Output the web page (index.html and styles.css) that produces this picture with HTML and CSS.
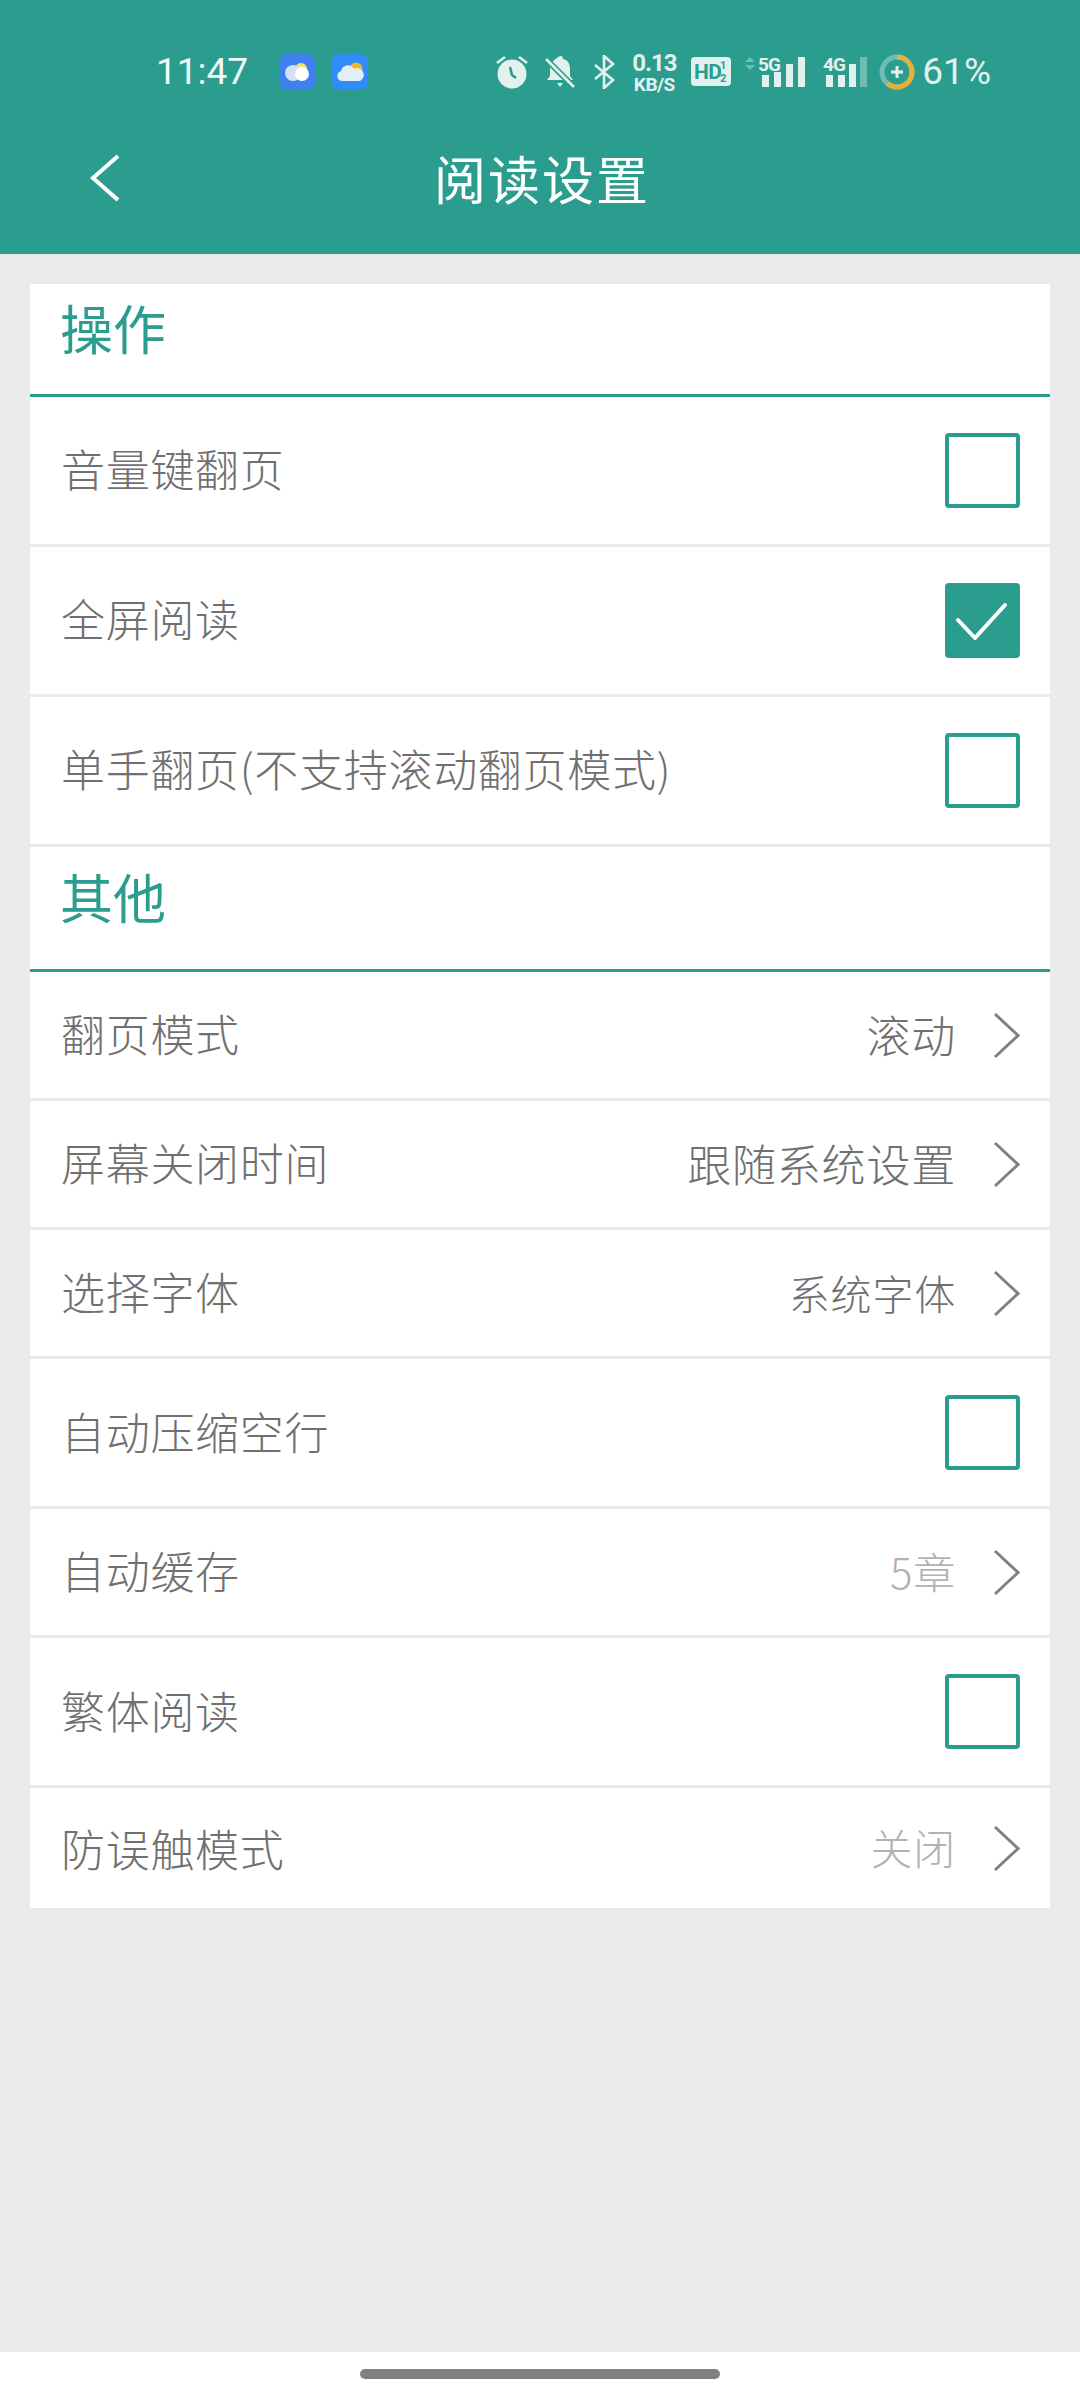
FILE: index.html
```html
<!DOCTYPE html>
<html lang="zh-CN">
<head>
    <meta charset="UTF-8">
    <meta name="viewport" content="width=device-width, initial-scale=1.0">
    <title>阅读设置</title>
    <link rel="stylesheet" href="styles.css">
</head>
<body>

    <header class="app-header">
        <div class="status-bar">
            <span class="status-time">11:47</span>
            <svg class="app-icon" width="36" height="36" viewBox="0 0 36 36">
                <rect width="36" height="36" rx="8" fill="#3f7ff0"/>
                <circle cx="22" cy="15" r="6" fill="#f5e36a"/>
                <circle cx="14" cy="19" r="8" fill="#d6e0f5"/>
                <circle cx="23" cy="20" r="7" fill="#ffffff"/>
            </svg>
            <svg class="app-icon app-icon-weather" width="36" height="36" viewBox="0 0 36 36">
                <rect width="36" height="36" rx="8" fill="#2f8cf8"/>
                <circle cx="24" cy="15" r="6.5" fill="#f7b52c"/>
                <path d="M10 27a5 5 0 0 1-1-9.8 7 7 0 0 1 13-2.4 6 6 0 0 1 6 12.2z" fill="#e4eef8"/>
            </svg>
            <div class="status-icons">
                <svg class="ic-alarm" width="32" height="34" viewBox="0 0 32 34">
                    <circle cx="16" cy="19" r="14.5" fill="#e3f1ee"/>
                    <path d="M1 8l8-6M31 8l-8-6" stroke="#e3f1ee" stroke-width="2.6" fill="none"/>
                    <path d="M14 12l2 8 4 3" stroke="#2a9d8e" stroke-width="2.6" fill="none"/>
                </svg>
                <svg class="ic-bell" width="30" height="34" viewBox="0 0 30 34">
                    <path d="M15 1a3 3 0 0 1 3 3c5 1 7 5 7 10v7l3 4H2l3-4v-7c0-5 3-9 10-13z" fill="#e3f1ee"/>
                    <path d="M12 28h6l-3 4z" fill="#e3f1ee"/>
                    <path d="M2 5l27 27" stroke="#2a9d8e" stroke-width="6"/>
                    <path d="M1 4l28 28" stroke="#e3f1ee" stroke-width="2.6"/>
                </svg>
                <svg class="ic-bt" width="21" height="34" viewBox="0 0 21 34">
                    <path d="M1 10l18 15-9 8V1l9 8L1 24" stroke="#e3f1ee" stroke-width="2.6" fill="none"/>
                </svg>
                <div class="net-speed">
                    <span class="net-num">0.13</span>
                    <span class="net-unit">KB/S</span>
                </div>
                <svg class="ic-hd" width="40" height="30" viewBox="0 0 40 30">
                    <rect width="40" height="29" rx="4" fill="#e3f1ee"/>
                    <text class="hd-label" x="3" y="22" fill="#2a9d8e">HD</text>
                    <text class="hd-small" x="29" y="12" fill="#2a9d8e">1</text>
                    <text class="hd-small" x="29" y="25" fill="#2a9d8e">2</text>
                </svg>
                <svg class="ic-signal" width="60" height="38" viewBox="0 0 60 38">
                    <path d="M0 9l5-5 5 5zM0 12l5 5 5-5z" fill="#6fbdb1"/>
                    <text class="sig-label" x="13" y="18" fill="#e3f1ee">5G</text>
                    <rect x="17" y="22" width="7" height="12" fill="#e3f1ee"/>
                    <rect x="29" y="19" width="7" height="15" fill="#e3f1ee"/>
                    <rect x="41" y="11" width="7" height="23" fill="#e3f1ee"/>
                    <rect x="53" y="4" width="7" height="30" fill="#e3f1ee"/>
                </svg>
                <svg class="ic-signal-b" width="44" height="38" viewBox="0 0 44 38">
                    <text class="sig-label" x="0" y="18" fill="#e3f1ee">4G</text>
                    <rect x="3" y="22" width="7" height="12" fill="#e3f1ee"/>
                    <rect x="15" y="22" width="7" height="12" fill="#e3f1ee"/>
                    <rect x="26" y="11" width="7" height="23" fill="#e3f1ee"/>
                    <rect x="37" y="4" width="7" height="30" fill="#6fbdb1"/>
                </svg>
                <svg class="ic-batt" width="36" height="36" viewBox="0 0 36 36">
                    <circle cx="18" cy="18" r="15" stroke="#6fbdb1" stroke-width="5" fill="none"/>
                    <path d="M18 3a15 15 0 1 1-9.6 26.5" stroke="#e4b23a" stroke-width="5" fill="none"/>
                    <path d="M18 12v12M12 18h12" stroke="#e3f1ee" stroke-width="3"/>
                </svg>
                <span class="status-batt">61%</span>
            </div>
        </div>
        <div class="nav-bar">
            <svg class="nav-back" width="32" height="48" viewBox="0 0 32 48">
                <path d="M29 2L4 24l25 22" stroke="#ffffff" stroke-width="4" fill="none"/>
            </svg>
            <h1 class="nav-title">阅读设置</h1>
        </div>
    </header>

    <main class="content">
        <section class="card">
            <div class="group-ops">
                <h2 class="section-title">操作</h2>
                <div class="row row-check">
                    <span class="row-label">音量键翻页</span>
                    <span class="checkbox"></span>
                </div>
                <div class="row row-check">
                    <span class="row-label">全屏阅读</span>
                    <span class="checkbox checked">
                        <svg width="67" height="67" viewBox="0 0 67 67">
                            <path d="M9 33l17 18 30-33" stroke="#ffffff" stroke-width="4" stroke-linecap="round" stroke-linejoin="round" fill="none"/>
                        </svg>
                    </span>
                </div>
                <div class="row row-check">
                    <span class="row-label">单手翻页(不支持滚动翻页模式)</span>
                    <span class="checkbox"></span>
                </div>
            </div>

            <h2 class="section-title section-title-b">其他</h2>
            <div class="row row-link">
                <span class="row-label">翻页模式</span>
                <span class="row-value">滚动</span>
                <svg class="chevron" width="27" height="47" viewBox="0 0 27 47"><path d="M2 2l23 21.5L2 45" /></svg>
            </div>
            <div class="row row-link">
                <span class="row-label">屏幕关闭时间</span>
                <span class="row-value">跟随系统设置</span>
                <svg class="chevron" width="27" height="47" viewBox="0 0 27 47"><path d="M2 2l23 21.5L2 45" /></svg>
            </div>
            <div class="row row-link">
                <span class="row-label">选择字体</span>
                <span class="row-value value-small">系统字体</span>
                <svg class="chevron" width="27" height="47" viewBox="0 0 27 47"><path d="M2 2l23 21.5L2 45" /></svg>
            </div>
            <div class="row row-check">
                <span class="row-label">自动压缩空行</span>
                <span class="checkbox"></span>
            </div>
            <div class="row row-link">
                <span class="row-label">自动缓存</span>
                <span class="row-value value-muted">5章</span>
                <svg class="chevron" width="27" height="47" viewBox="0 0 27 47"><path d="M2 2l23 21.5L2 45" /></svg>
            </div>
            <div class="row row-check">
                <span class="row-label">繁体阅读</span>
                <span class="checkbox"></span>
            </div>
            <div class="row row-link row-last">
                <span class="row-label">防误触模式</span>
                <span class="row-value value-muted">关闭</span>
                <svg class="chevron" width="27" height="47" viewBox="0 0 27 47"><path d="M2 2l23 21.5L2 45" /></svg>
            </div>
        </section>
    </main>

    <footer class="gesture-bar">
        <div class="gesture-pill"></div>
    </footer>

</body>
</html>
```
FILE: styles.css
```css
* {
    box-sizing: border-box;
}

body {
    margin: 0;
    width: 1080px;
    height: 2400px;
    display: flex;
    flex-direction: column;
    background: #ebebeb;
    font-family: "Noto Sans CJK SC", "Noto Sans", sans-serif;
    color: #707070;
}

/* header */
.app-header {
    height: 254px;
    background: #2a9d8e;
    color: #fff;
}

.status-bar {
    height: 90px;
    padding: 54px 89px 0 156px;
    display: flex;
    align-items: flex-start;
}

.status-time {
    width: 123px;
    font-family: Roboto, sans-serif;
    font-size: 37px;
    line-height: 36px;
    font-weight: 400;
    color: #f2f9f7;
}

.app-icon { flex: none; }
.app-icon-weather { margin-left: 17px; }

.status-icons {
    margin-left: auto;
    display: flex;
    align-items: center;
    height: 36px;
}

.ic-bell { margin-left: 17px; }
.ic-bt { margin-left: 19px; }
.net-speed { margin-left: 17px; }
.ic-hd { margin-left: 15px; }
.ic-signal { margin-left: 14px; }
.ic-signal-b { margin-left: 18px; }
.ic-batt { margin-left: 12px; }

.net-speed {
    width: 44px;
    display: flex;
    flex-direction: column;
    align-items: center;
    font-family: Roboto, sans-serif;
    font-weight: 700;
    color: #e3f1ee;
}

.net-num { font-size: 24px; line-height: 24px; letter-spacing: -1px; }
.net-unit { font-size: 19px; line-height: 19px; letter-spacing: -0.5px; }

.hd-label, .sig-label {
    font-family: Roboto, sans-serif;
    font-weight: 700;
}
.hd-label { font-size: 21px; letter-spacing: -0.5px; }
.sig-label { font-size: 19px; letter-spacing: -1px; }
.hd-small {
    font-family: Roboto, sans-serif;
    font-weight: 700;
    font-size: 11px;
}

.status-batt {
    margin-left: 7px;
    font-family: Roboto, sans-serif;
    font-size: 37px;
    line-height: 36px;
    color: #e3f1ee;
}

.nav-bar {
    height: 164px;
    padding: 0 0 0 89px;
    display: grid;
    grid-template-columns: 32px 1fr 32px;
    align-items: center;
}

.nav-back { margin-top: 12px; }

.nav-title {
    margin: 12px 85px 0 0;
    font-size: 52px;
    line-height: 70px;
    font-weight: 400;
    letter-spacing: 2px;
    text-align: center;
    grid-column: 2;
}

/* list */
.content {
    flex: 1;
    padding: 30px 30px 0;
}

.card {
    background: #fff;
}

.section-title {
    height: 113px;
    margin: 0;
    padding: 11px 0 0 30px;
    border-bottom: 3px solid #2a9d8e;
    font-size: 53px;
    line-height: 64px;
    font-weight: 400;
    color: #2a9d8e;
}

.section-title-b {
    height: 125px;
    padding-top: 17px;
}

.row {
    display: flex;
    align-items: center;
    padding: 0 30px;
    border-bottom: 3px solid #ebebeb;
}

.row-check { height: 150px; }
.row-link { height: 129px; }
.row-last { height: 120px; border-bottom: none; }

.row-label {
    font-size: 44px;
    line-height: 60px;
    font-weight: 300;
    letter-spacing: 0.7px;
    margin: -4px 0 0 1px;
}

.group-ops .row-label { margin-top: -6px; }
.row-last .row-label { margin-top: 0; }

.row-value {
    margin: -3px 37px 0 auto;
    font-size: 44px;
    line-height: 60px;
    font-weight: 300;
    letter-spacing: 0.8px;
}

.value-small { font-size: 41px; }
.value-muted { color: #b2b2b2; font-size: 42px; }

.chevron {
    flex: none;
    fill: none;
    stroke: #808080;
    stroke-width: 3px;
}

.checkbox {
    flex: none;
    width: 75px;
    height: 75px;
    margin-left: auto;
    border: 4px solid #2a9d8e;
    border-radius: 4px;
}

.checkbox.checked {
    background: #2a9d8e;
}

.checkbox svg {
    display: block;
}

/* bottom gesture area */
.gesture-bar {
    height: 48px;
    padding-top: 17px;
    background: #fff;
}

.gesture-pill {
    width: 360px;
    height: 10px;
    margin: 0 auto;
    border-radius: 5px;
    background: #808080;
}
```
